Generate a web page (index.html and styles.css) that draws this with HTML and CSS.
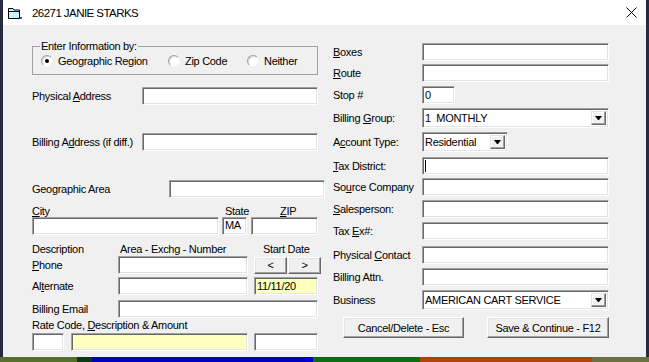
FILE: index.html
```html
<!DOCTYPE html>
<html lang="en">
<head>
    <meta charset="UTF-8">
    <meta name="viewport" content="width=device-width, initial-scale=1.0">
    <title>26271 JANIE STARKS</title>
    <link rel="stylesheet" href="styles.css">
</head>
<body>
    <div class="window">
        <!-- Title bar -->
        <div class="titlebar">
            <svg class="app-icon" width="14" height="12" viewBox="0 0 14 12">
                <path d="M0.5 0.5h4.5l1 1.5h5.5v8.5h-11z" fill="#c8f4ff" stroke="#000"/>
                <path d="M1 3.5h10" stroke="#000"/>
                <rect x="12" y="9" width="2" height="2" fill="#555"/>
            </svg>
            <span class="title">26271 JANIE STARKS</span>
            <svg class="close" width="11" height="11" viewBox="0 0 11 11">
                <path d="M0.5 0.5l10 10M10.5 0.5l-10 10" stroke="#000" stroke-width="1"/>
            </svg>
        </div>

        <div class="client">
            <!-- Left column -->
            <div class="col-left">
                <fieldset class="group">
                    <legend>Enter Information by:</legend>
                    <div class="radios">
                        <span class="radio radio-geo"><span class="dot checked"></span>Geographic Region</span>
                        <span class="radio radio-zip"><span class="dot"></span>Zip Code</span>
                        <span class="radio"><span class="dot"></span>Neither</span>
                    </div>
                </fieldset>

                <div class="row row-phys">
                    <span class="lbl lbl-addr">Physical <u>A</u>ddress</span>
                    <span class="box w-addr"></span>
                </div>
                <div class="row row-bill">
                    <span class="lbl lbl-addr">Billing A<u>d</u>dress (if diff.)</span>
                    <span class="box w-addr"></span>
                </div>
                <div class="row row-geo">
                    <span class="lbl lbl-geo">Geographic Area</span>
                    <span class="box w-geo"></span>
                </div>

                <div class="caps row-citycap">
                    <span class="cap-city"><u>C</u>ity</span>
                    <span class="cap-state">State</span>
                    <span><u>Z</u>IP</span>
                </div>
                <div class="row">
                    <span class="box w-city"></span>
                    <span class="box w-state">MA</span>
                    <span class="box w-zip"></span>
                </div>

                <div class="caps row-desc">
                    <span class="cap-desc">Description</span>
                    <span class="cap-area">Area - Exchg - Number</span>
                    <span>Start Date</span>
                </div>
                <div class="row row-phone">
                    <span class="lbl lbl-phone"><u>P</u>hone</span>
                    <span class="box w-phone"></span>
                    <span class="btn btn-prev">&lt;</span>
                    <span class="btn btn-next">&gt;</span>
                </div>
                <div class="row row-alt">
                    <span class="lbl lbl-phone">Al<u>t</u>ernate</span>
                    <span class="box w-phone"></span>
                    <span class="box yellow w-date">11/11/20</span>
                </div>
                <div class="row row-email">
                    <span class="lbl lbl-phone">Billing Email</span>
                    <span class="box w-email"></span>
                </div>

                <div class="caps"><span>Rate Code, <u>D</u>escription &amp; Amount</span></div>
                <div class="row row-rate">
                    <span class="box w-code"></span>
                    <span class="box yellow w-rdesc"></span>
                    <span class="box w-amount"></span>
                </div>
            </div>

            <!-- Right column -->
            <div class="col-right">
                <div class="row">
                    <span class="lbl lbl-r"><u>B</u>oxes</span>
                    <span class="box w-r"></span>
                </div>
                <div class="row mt3">
                    <span class="lbl lbl-r"><u>R</u>oute</span>
                    <span class="box w-r"></span>
                </div>
                <div class="row mt4">
                    <span class="lbl lbl-r">Stop #</span>
                    <span class="box w-stop">0</span>
                </div>
                <div class="row combo-row mt4">
                    <span class="lbl lbl-r">Billing <u>G</u>roup:</span>
                    <span class="combo w-r"><span class="combo-text">1  MONTHLY</span><span class="drop"></span></span>
                </div>
                <div class="row combo-row mt4">
                    <span class="lbl lbl-r">A<u>c</u>count Type:</span>
                    <span class="combo w-acct"><span class="combo-text">Residential</span><span class="drop"></span></span>
                </div>
                <div class="row mt5">
                    <span class="lbl lbl-r"><u>T</u>ax District:</span>
                    <span class="box w-r"><span class="caret"></span></span>
                </div>
                <div class="row mt3">
                    <span class="lbl lbl-r">So<u>u</u>rce Company</span>
                    <span class="box w-r"></span>
                </div>
                <div class="row mt4">
                    <span class="lbl lbl-r"><u>S</u>alesperson:</span>
                    <span class="box w-r"></span>
                </div>
                <div class="row mt4">
                    <span class="lbl lbl-r">Tax <u>E</u>x#:</span>
                    <span class="box w-r"></span>
                </div>
                <div class="row mt6">
                    <span class="lbl lbl-r">Physical <u>C</u>ontact</span>
                    <span class="box w-r"></span>
                </div>
                <div class="row mt4">
                    <span class="lbl lbl-r">Billing Attn.</span>
                    <span class="box w-r"></span>
                </div>
                <div class="row combo-row mt4">
                    <span class="lbl lbl-r">Business</span>
                    <span class="combo w-r"><span class="combo-text">AMERICAN CART SERVICE</span><span class="drop"></span></span>
                </div>
                <div class="buttons">
                    <span class="btn btn-cancel">Cancel/Delete - Esc</span>
                    <span class="btn btn-save">Save &amp; Continue - F12</span>
                </div>
            </div>
        </div>
    </div>

    <!-- desktop visible below the dialog -->
    <div class="strip">
        <span class="s1"></span><span class="s2"></span><span class="s3"></span><span class="s4"></span>
        <span class="s5"></span><span class="s6"></span><span class="s7"></span>
    </div>
</body>
</html>
```

FILE: styles.css
```css
* {
    box-sizing: border-box;
}
body {
    margin: 0;
    background-color: #262b3d;
    font-family: "Liberation Sans", Arial, sans-serif;
    font-size: 11px;
    letter-spacing: -0.3px;
    color: #000;
    overflow: hidden;
}
u {
    text-underline-offset: 1px;
}
.window {
    margin-left: 3px;
    width: 643px;
    height: 357px;
    background-color: #f0f0f0;
    display: flex;
    flex-direction: column;
}

/* title bar */
.titlebar {
    height: 25px;
    flex-shrink: 0;
    background-color: #fff;
    display: flex;
    align-items: center;
    padding-left: 5px;
}
.app-icon {
    margin-top: 2px;
}
.title {
    margin-left: 10px;
    font-size: 11.5px;
    letter-spacing: -0.55px;
}
.close {
    margin-left: auto;
    margin-right: 9px;
}

/* client area */
.client {
    display: flex;
    padding-left: 29px;
}
.col-left {
    width: 293px;
    display: flex;
    flex-direction: column;
}
.col-right {
    width: 276px;
    margin-left: 8px;
    padding-top: 18px;
    display: flex;
    flex-direction: column;
}
.row {
    display: flex;
    align-items: center;
    height: 18px;
    flex-shrink: 0;
}
.caps {
    display: flex;
    align-items: center;
    height: 13px;
    flex-shrink: 0;
    white-space: nowrap;
}
.lbl {
    white-space: nowrap;
    flex-shrink: 0;
}

/* group box */
.group {
    margin: 15px 0 0;
    width: 286px;
    padding: 1px 7px 6px 8px;
    border: 1px solid #a0a0a0;
    min-inline-size: 0;
}
.group legend {
    padding: 0 1px;
    margin-left: -1px;
    line-height: 13px;
}
.radios {
    display: flex;
    align-items: center;
    height: 14px;
}
.radio {
    display: flex;
    align-items: center;
    white-space: nowrap;
}
.radio-geo {
    width: 127px;
}
.radio-zip {
    width: 79px;
}
.dot {
    width: 12px;
    height: 12px;
    margin-right: 5px;
    border-radius: 50%;
    background-color: #fff;
    border: 1px solid;
    border-color: #a0a0a0 #f4f4f4 #f4f4f4 #a0a0a0;
    box-shadow: inset 1px 1px 0 #d8d8d8;
    display: flex;
    align-items: center;
    justify-content: center;
}
.dot.checked::after {
    content: "";
    width: 4px;
    height: 4px;
    border-radius: 50%;
    background-color: #000;
}

/* sunken edit boxes */
.box {
    display: flex;
    align-items: center;
    height: 18px;
    padding-left: 2px;
    flex-shrink: 0;
    background-color: #fff;
    border: 1px solid;
    border-color: #a0a0a0 #fff #fff #a0a0a0;
    box-shadow: inset 1px 1px 0 #696969, inset -1px -1px 0 #e3e3e3;
    white-space: pre;
}
.box.yellow {
    background-color: #ffffc0;
}
.caret {
    width: 1px;
    height: 12px;
    background-color: #000;
}

/* combo boxes */
.combo-row {
    height: 20px;
}
.combo {
    display: flex;
    align-items: center;
    height: 20px;
    padding: 2px;
    background-color: #fff;
    border: 1px solid;
    border-color: #a0a0a0 #fff #fff #a0a0a0;
    box-shadow: inset 1px 1px 0 #696969, inset -1px -1px 0 #e3e3e3;
}
.combo-text {
    flex: 1;
    white-space: pre;
}
.drop {
    width: 15px;
    height: 14px;
    background-color: #f0f0f0;
    border: 1px solid;
    border-color: #e3e3e3 #696969 #696969 #e3e3e3;
    box-shadow: inset -1px -1px 0 #a0a0a0, inset 1px 1px 0 #fff;
    display: flex;
    align-items: center;
    justify-content: center;
}
.drop::after {
    content: "";
    width: 1px;
    height: 0;
    border-left: 3px solid transparent;
    border-right: 3px solid transparent;
    border-top: 4px solid #000;
}

/* raised buttons */
.btn {
    display: flex;
    align-items: center;
    justify-content: center;
    flex-shrink: 0;
    height: 21px;
    background-color: #f0f0f0;
    border: 1px solid;
    border-color: #fff #696969 #696969 #fff;
    box-shadow: inset -1px -1px 0 #a0a0a0, inset 1px 1px 0 #e3e3e3;
    white-space: nowrap;
}

/* left column rows */
.row-phys { margin-top: 12px; }
.row-bill { margin-top: 28px; }
.row-geo { margin-top: 29px; }
.row-citycap { margin-top: 6px; }
.row-desc { margin-top: 7px; }
.row-phone { margin-top: 1px; }
.row-alt { margin-top: 3px; }
.row-email { margin-top: 5px; }
.row-rate { margin-top: 2px; }

.lbl-addr { width: 110px; }
.lbl-geo { width: 137px; }
.lbl-phone { width: 86px; }
.w-addr { width: 176px; }
.w-geo { width: 156px; }
.cap-city { width: 193px; }
.cap-state { width: 55px; }
.cap-desc { width: 88px; }
.cap-area { width: 143px; }
.w-city { width: 187px; }
.w-state { width: 25px; margin-left: 3px; align-items: flex-start; padding-top: 1px; }
.w-zip { width: 67px; margin-left: 4px; }
.w-phone { width: 130px; }
.btn-prev { width: 33px; height: 17px; margin-left: 6px; }
.btn-next { width: 33px; height: 17px; margin-left: 1px; }
.w-date { width: 64px; margin-left: 6px; }
.w-email { width: 200px; }
.w-code { width: 32px; }
.w-rdesc { width: 177px; margin-left: 7px; }
.w-amount { width: 64px; margin-left: 6px; }

/* right column rows */
.mt3 { margin-top: 3px; }
.mt4 { margin-top: 4px; }
.mt5 { margin-top: 5px; }
.mt6 { margin-top: 6px; }
.lbl-r { width: 89px; }
.w-r { width: 187px; }
.w-stop { width: 33px; }
.w-acct { width: 86px; }
.buttons {
    display: flex;
    margin-top: 7px;
    padding-left: 10px;
}
.btn-cancel { width: 121px; }
.btn-save { width: 122px; margin-left: 23px; }

/* desktop strip */
.strip {
    display: flex;
    height: 5px;
}
.strip span { display: block; height: 5px; }
.s1 { width: 77px; background-color: #56702c; }
.s2 { width: 15px; background-color: #0b3a12; }
.s3 { width: 221px; background-color: #0000c4; }
.s4 { width: 107px; background-color: #0f6a14; }
.s5 { width: 172px; background-color: #b0420e; }
.s6 { width: 57px; background-color: #6c7040; }
.s7 { flex: 1; background-color: #262b3d; }
```
